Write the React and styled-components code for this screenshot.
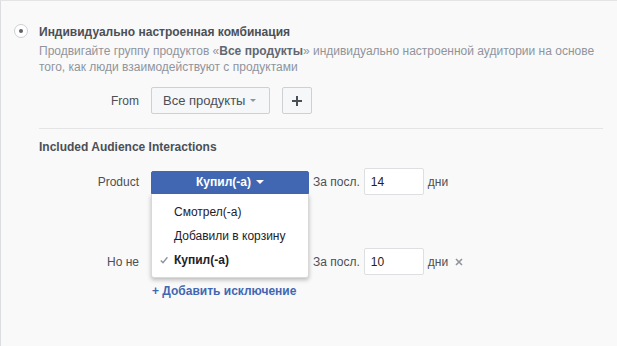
import React from "react";
import styled, { createGlobalStyle } from "styled-components";

const Global = createGlobalStyle`
  html, body { margin: 0; padding: 0; }
  body {
    background: #f9f9f9;
    font-family: "Liberation Sans", Arial, sans-serif;
    font-size: 12px;
    color: #4b4f56;
    -webkit-font-smoothing: antialiased;
  }
`;

const Page = styled.div`
  box-sizing: border-box;
  width: 617px;
  height: 346px;
  border-top: 1px solid #e3e4e6;
  border-left: 1px solid #dcdde0;
  padding: 23px 14px 0 0;
  overflow: hidden;
`;

const OptionRow = styled.div`
  display: flex;
  align-items: flex-start;
  gap: 11px;
  padding-left: 13px;
`;

const Radio = styled.span`
  box-sizing: border-box;
  width: 14px;
  height: 14px;
  flex: none;
  border-radius: 50%;
  border: 1px solid #ccd0d5;
  background: #fff;
  display: flex;
  align-items: center;
  justify-content: center;
`;

const RadioDot = styled.span`
  width: 4px;
  height: 4px;
  border-radius: 50%;
  background: #5d6168;
`;

const OptionText = styled.div`
  display: flex;
  flex-direction: column;
  gap: 3px;
`;

const Title = styled.div`
  font-weight: bold;
  line-height: 16px;
  color: #4b4f56;
`;

const Desc = styled.div`
  width: 565px;
  line-height: 16px;
  color: #90949c;
  b { font-weight: bold; color: #606770; }
`;

const FormRow = styled.div`
  display: flex;
  align-items: center;
  gap: 12px;
  margin-top: ${(p) => p.$top || 0}px;
`;

const Label = styled.div`
  width: 138px;
  text-align: right;
  line-height: 16px;
  color: #4b4f56;
`;

const Controls = styled.div`
  display: flex;
  align-items: center;
  gap: ${(p) => p.$gap || 0}px;
`;

const GrayButton = styled.button`
  box-sizing: border-box;
  height: 27px;
  padding: ${(p) => (p.$square ? "0" : "0 13px 0 11px")};
  width: ${(p) => (p.$square ? "30px" : "auto")};
  display: flex;
  align-items: center;
  justify-content: center;
  gap: 5px;
  background: #f6f7f9;
  border: 1px solid #ced0d4;
  border-radius: 2px;
  font-family: inherit;
  font-size: 13px;
  color: #4b4f56;
`;

const Caret = styled.span`
  width: 0;
  height: 0;
  border-left: ${(p) => p.$size}px solid transparent;
  border-right: ${(p) => p.$size}px solid transparent;
  border-top: ${(p) => p.$size}px solid ${(p) => p.$color};
`;

const Divider = styled.div`
  height: 1px;
  background: #e5e5e5;
  margin: 14px 0 0 38px;
`;

const SectionTitle = styled.div`
  margin: 10px 0 0 38px;
  font-weight: bold;
  line-height: 16px;
  color: #4b4f56;
`;

const SelectWrap = styled.div`
  position: relative;
  width: 158px;
  height: 23px;
  margin-top: 1px;
`;

const BlueSelect = styled.button`
  box-sizing: border-box;
  width: 158px;
  height: 23px;
  display: flex;
  align-items: center;
  justify-content: center;
  gap: 5px;
  background: #4267b2;
  border: 1px solid #4267b2;
  border-radius: 2px 2px 0 0;
  color: #fff;
  font-family: inherit;
  font-size: 12px;
  font-weight: bold;
`;

const Menu = styled.div`
  position: absolute;
  z-index: 5;
  top: 23px;
  left: 0;
  box-sizing: border-box;
  width: 158px;
  padding: 6px 0 5px;
  background: #fff;
  border: 1px solid rgba(0, 0, 0, 0.15);
  border-top: none;
  border-radius: 0 0 3px 3px;
  box-shadow: 0 2px 4px rgba(0, 0, 0, 0.25);
`;

const MenuItem = styled.div`
  position: relative;
  height: 24px;
  line-height: 24px;
  padding-left: 22px;
  color: #1d2129;
  font-weight: ${(p) => (p.$selected ? "bold" : "normal")};
`;

const Check = styled.svg`
  position: absolute;
  left: 8px;
  top: 8px;
`;

const Text = styled.span`
  color: ${(p) => p.$color || "#4b4f56"};
  line-height: 16px;
  margin: ${(p) => p.$margin || "0"};
`;

const NumberInput = styled.input`
  box-sizing: border-box;
  width: 60px;
  height: 27px;
  padding: 0 6px;
  border: 1px solid #dddfe2;
  border-radius: 2px;
  background: #fff;
  font-family: inherit;
  font-size: 12px;
  color: #1d2129;
  outline: none;
`;

const RemoveIcon = styled.svg`
  margin-left: 7px;
`;

const AddLink = styled.a`
  display: block;
  margin: 8px 0 0 151px;
  font-weight: bold;
  line-height: 16px;
  color: #4267b2;
  text-decoration: none;
`;

function Interaction({ label, value, open, removable, top }) {
  return (
    <FormRow $top={top}>
      <Label>{label}</Label>
      <Controls>
        <SelectWrap>
          <BlueSelect>
            Купил(-а) <Caret $size={4} $color="#fff" />
          </BlueSelect>
          {open && (
            <Menu>
              <MenuItem>Смотрел(-а)</MenuItem>
              <MenuItem>Добавили в корзину</MenuItem>
              <MenuItem $selected>
                <Check width="8" height="8" viewBox="0 0 8 8">
                  <path d="M0.8 4.4 L3 6.6 L7.4 1.2" fill="none" stroke="#90949c" strokeWidth="1.4" />
                </Check>
                Купил(-а)
              </MenuItem>
            </Menu>
          )}
        </SelectWrap>
        <Text $margin="0 4px 0 4px">За посл.</Text>
        <NumberInput defaultValue={value} />
        <Text $margin="0 0 0 4px">дни</Text>
        {removable && (
          <RemoveIcon width="8" height="8" viewBox="0 0 8 8">
            <path d="M1 1 L7 7 M7 1 L1 7" stroke="#90949c" strokeWidth="1.6" />
          </RemoveIcon>
        )}
      </Controls>
    </FormRow>
  );
}

export default function App() {
  return (
    <>
      <Global />
      <Page>
        <OptionRow>
          <Radio>
            <RadioDot />
          </Radio>
          <OptionText>
            <Title>Индивидуально настроенная комбинация</Title>
            <Desc>
              Продвигайте группу продуктов «<b>Все продукты</b>» индивидуально настроенной аудитории на основе
              того, как люди взаимодействуют с продуктами
            </Desc>
          </OptionText>
        </OptionRow>
        <FormRow $top={12}>
          <Label>From</Label>
          <Controls $gap={12}>
            <GrayButton>
              Все продукты <Caret $size={3} $color="#90949c" />
            </GrayButton>
            <GrayButton $square>
              <svg width="10" height="10" viewBox="0 0 10 10">
                <path d="M5 0 V10 M0 5 H10" stroke="#4b4f56" strokeWidth="2" />
              </svg>
            </GrayButton>
          </Controls>
        </FormRow>
        <Divider />
        <SectionTitle>Included Audience Interactions</SectionTitle>
        <Interaction label="Product" value="14" open top={13} />
        <Interaction label="Но не" value="10" removable top={53} />
        <AddLink href="#">+ Добавить исключение</AddLink>
      </Page>
    </>
  );
}
